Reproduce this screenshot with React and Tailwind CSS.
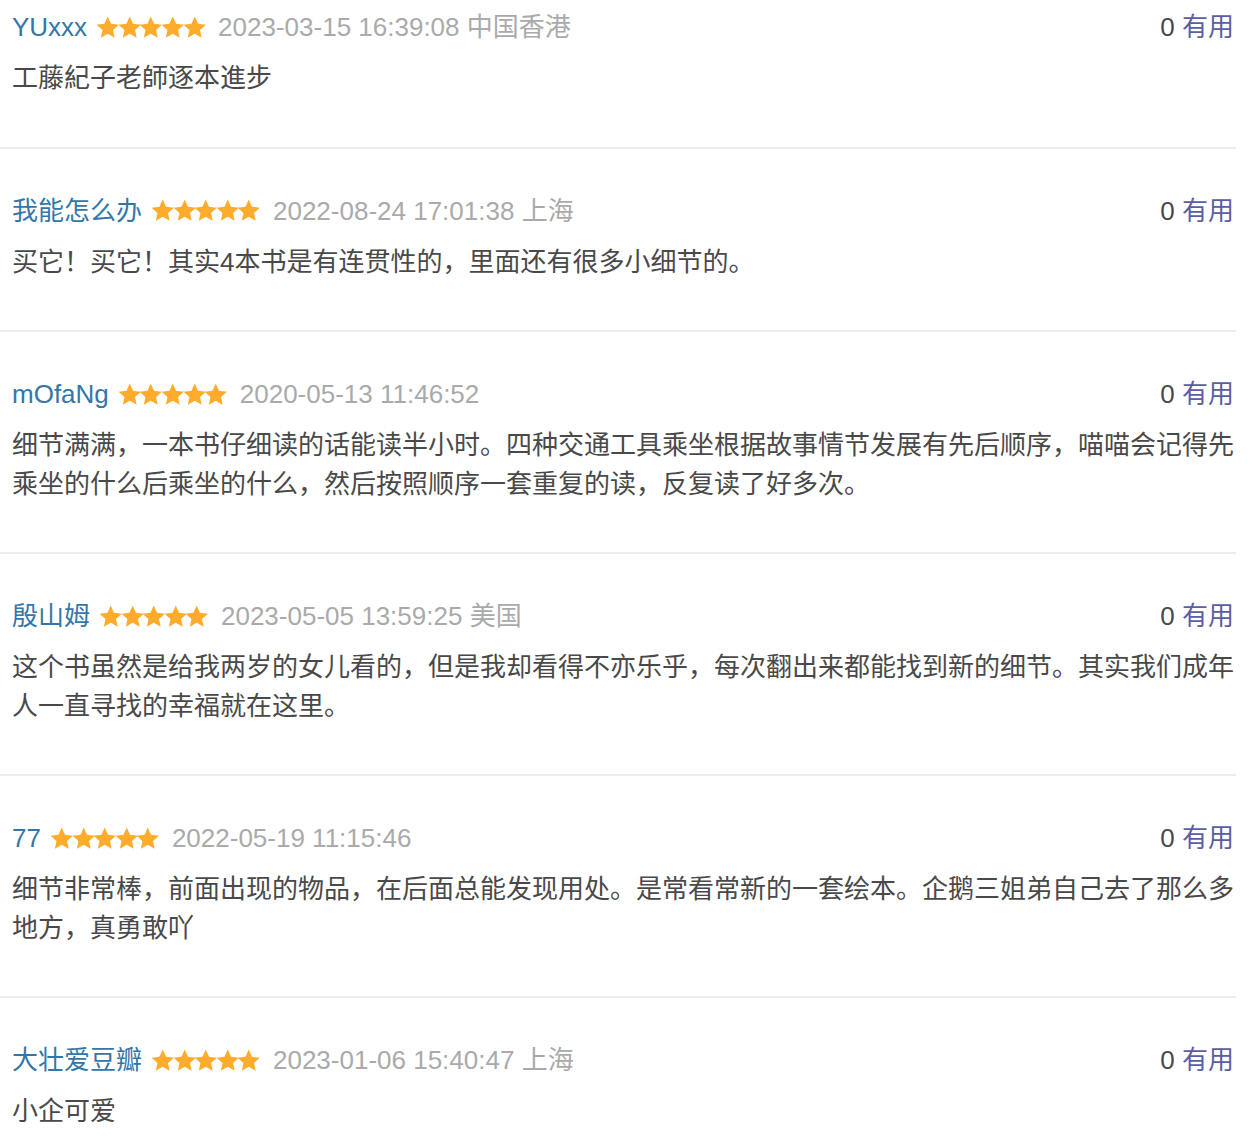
import React from "react";

const reviews = [
  { name: "YUxxx", date: "2023-03-15 16:39:08 中国香港", text: "工藤紀子老師逐本進步" },
  { name: "我能怎么办", date: "2022-08-24 17:01:38 上海", text: "买它！买它！其实4本书是有连贯性的，里面还有很多小细节的。" },
  { name: "mOfaNg", date: "2020-05-13 11:46:52", text: "细节满满，一本书仔细读的话能读半小时。四种交通工具乘坐根据故事情节发展有先后顺序，喵喵会记得先乘坐的什么后乘坐的什么，然后按照顺序一套重复的读，反复读了好多次。" },
  { name: "殷山姆", date: "2023-05-05 13:59:25 美国", text: "这个书虽然是给我两岁的女儿看的，但是我却看得不亦乐乎，每次翻出来都能找到新的细节。其实我们成年人一直寻找的幸福就在这里。" },
  { name: "77", date: "2022-05-19 11:15:46", text: "细节非常棒，前面出现的物品，在后面总能发现用处。是常看常新的一套绘本。企鹅三姐弟自己去了那么多地方，真勇敢吖" },
  { name: "大壮爱豆瓣", date: "2023-01-06 15:40:47 上海", text: "小企可爱" },
];

function Star() {
  return (
    <svg width="23.5" height="22.5" viewBox="0 0 22 21" className="block shrink-0">
      <path
        d="M11 0.5L14.06 7.29L21.46 8.1L15.95 13.11L17.47 20.4L11 16.7L4.53 20.4L6.05 13.11L0.54 8.1L7.94 7.29Z"
        fill="#FFAC2D"
      />
    </svg>
  );
}

function Stars() {
  return (
    <span className="flex items-center ml-[10px] mr-[13px]">
      {[0, 1, 2, 3, 4].map((i) => (
        <span key={i} className="w-[21.6px] flex justify-center">
          <Star />
        </span>
      ))}
    </span>
  );
}

export default function App() {
  return (
    <div className="w-[1236px] bg-white">
      <div className="font-['Liberation_Sans','Noto_Sans_CJK_SC',sans-serif] text-[26px]">
        {reviews.map((r, idx) => (
          <div
            key={idx}
            className={`${idx === 0 ? "pt-[9px]" : "pt-[44px]"} pb-[49px] pl-[12px] pr-[2px] border-b-2 border-[#ececec]`}
          >
            <div className="flex items-center h-[36px] leading-[36px]">
              <span className="text-[#3377aa] whitespace-nowrap">{r.name}</span>
              <Stars />
              <span className="text-[#aaaaaa] whitespace-nowrap">{r.date}</span>
              <span className="ml-auto whitespace-nowrap">
                <span className="text-[#494949]">0</span>
                <span className="text-[#5d5da3]"> 有用</span>
              </span>
            </div>
            <div className="mt-[14px] leading-[38.5px] text-[#494949]">{r.text}</div>
          </div>
        ))}
      </div>
    </div>
  );
}
